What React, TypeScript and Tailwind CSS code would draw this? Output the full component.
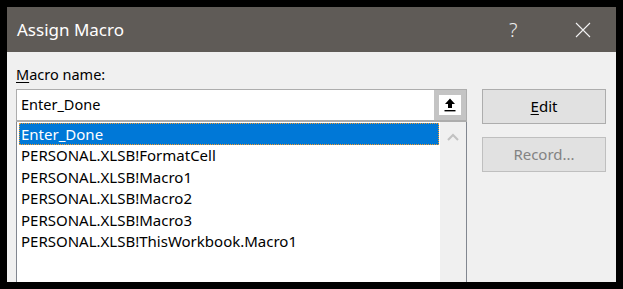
import React from 'react';

const font = { fontFamily: '"Segoe UI", "Noto Sans", "Open Sans", sans-serif' };

export default function App() {
  const macros = [
    'Enter_Done',
    'PERSONAL.XLSB!FormatCell',
    'PERSONAL.XLSB!Macro1',
    'PERSONAL.XLSB!Macro2',
    'PERSONAL.XLSB!Macro3',
    'PERSONAL.XLSB!ThisWorkbook.Macro1',
  ];

  return (
    <div className="w-[623px] h-[289px] bg-black pt-[7px] pl-[7px] overflow-hidden" style={font}>
      <div className="w-[609px] h-[275px] flex flex-col bg-[#f0f0f0] overflow-hidden">
        {/* Title bar */}
        <div className="h-[45px] shrink-0 bg-[#5f5b57] flex items-center text-white">
          <div className="pl-[10px] text-[17px] flex-1 leading-none">Assign Macro</div>
          <div className="w-[10px] text-[20px] font-light leading-none text-[#ececec]">?</div>
          <div className="w-[56px]" />
          <svg width="16" height="16" viewBox="0 0 16 16" className="mr-[25px]">
            <path d="M1 1 L15 15 M15 1 L1 15" stroke="#f2f2f2" strokeWidth="1.1" />
          </svg>
        </div>

        {/* Body */}
        <div className="flex flex-1 pl-[9px] min-h-0">
          <div className="w-[451px] flex flex-col min-h-0">
            <div className="pt-[11px] h-[33px] leading-[22px] text-[14.5px] text-black">
              <span className="underline underline-offset-2">M</span>acro name:
            </div>
            <div className="mt-[4px] h-[33px] shrink-0 flex border-t border-l border-r border-b-2 border-[#adadad] bg-white">
              <div className="flex-1 flex items-center pl-[4px] text-[14.5px] text-black">Enter_Done</div>
              <div className="w-[32px] bg-[#c4c4c4] flex items-center justify-center">
                <div className="w-[22px] h-[20px] bg-white flex items-center justify-center">
                  <svg width="12" height="14" viewBox="0 0 12 14">
                    <path d="M6 0.5 L11 6 L8 6 L8 10 L4 10 L4 6 L1 6 Z" fill="#000" />
                    <rect x="0.5" y="12" width="11" height="1.4" fill="#000" />
                  </svg>
                </div>
              </div>
            </div>
            <div className="flex-1 flex min-h-0 border-l border-r border-[#828790] bg-white">
              <div className="flex-1 pt-[1px] pl-[2px] pr-[1px] flex flex-col">
                {macros.map((m, i) => (
                  <div
                    key={m}
                    className={
                      i === 0
                        ? 'h-[21.5px] shrink-0 flex items-center pl-[1px] bg-[#0078d7] text-white text-[15px] border border-dotted border-[#f09a2c]'
                        : 'h-[21.5px] shrink-0 flex items-center pl-[2px] text-black text-[15px]'
                    }
                  >
                    {m}
                  </div>
                ))}
              </div>
              <div className="w-[26px] bg-[#f0f0f0] flex justify-center pt-[11px]">
                <svg width="12" height="8" viewBox="0 0 12 8">
                  <path d="M1 7 L6 2 L11 7" stroke="#c2c2c2" strokeWidth="2" fill="none" />
                </svg>
              </div>
            </div>
          </div>

          <div className="ml-[15px] pt-[37px] flex flex-col gap-[13px]">
            <div className="w-[124px] h-[35px] bg-[#e1e1e1] border border-[#adadad] flex items-center justify-center text-[15px] text-black">
              <span><span className="underline underline-offset-2">E</span>dit</span>
            </div>
            <div className="w-[124px] h-[35px] bg-[#e1e1e1] border border-[#bfbfbf] flex items-center justify-center text-[15px] text-[#838383]">
              Record...
            </div>
          </div>
        </div>
      </div>
    </div>
  );
}
